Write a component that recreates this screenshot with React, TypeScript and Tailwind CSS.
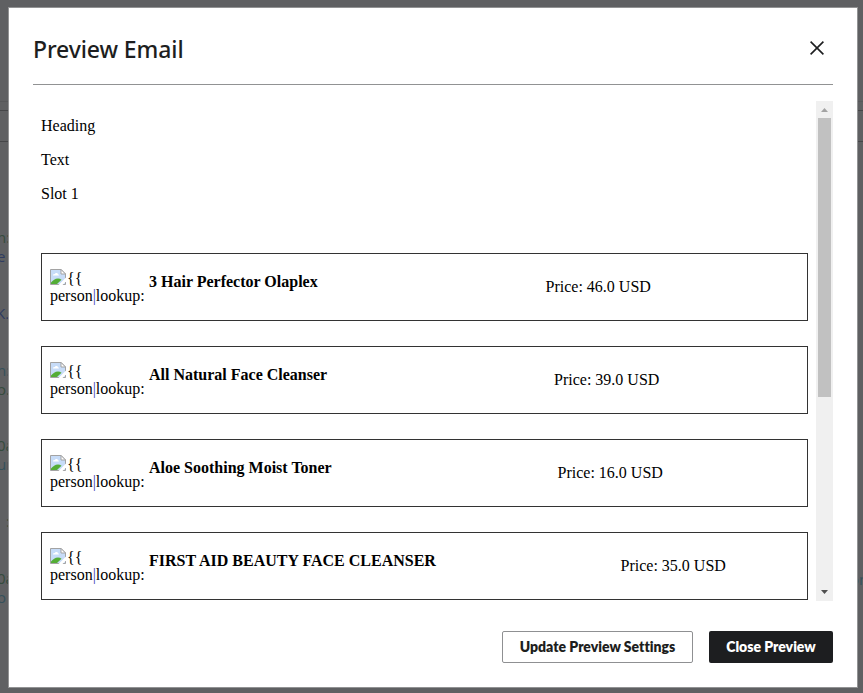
import React from "react";

const products = [
  { name: "3 Hair Perfector Olaplex", price: "46.0", cell: "w-[396.5px]" },
  { name: "All Natural Face Cleanser", price: "39.0", cell: "w-[405px]" },
  { name: "Aloe Soothing Moist Toner", price: "16.0", cell: "w-[408.5px]" },
  { name: "FIRST AID BEAUTY FACE CLEANSER", price: "35.0", cell: "w-[471.5px]" },
];

function BrokenImage() {
  return (
    <svg className="h-4 w-4 shrink-0" viewBox="0 0 16 16" fill="none">
      <path d="M.5.5h10.7L15.5 5v10.5H.5z" fill="#c7dcf8" stroke="#a3a3a3" />
      <path d="M3 6.6c0-1.2 1-1.7 1.8-1.4C5.2 3.4 7.7 3.5 8 5.2c1 0 1.300 1.400.4 1.400z" fill="#fff" />
      <path d="M1 15v-1.500C3 11.500 5 9.500 8 9.500c1.300 0 2.500.5 3.500 1.200L7 15z" fill="#54ad36" />
      <path d="M16 8.500 8.500 16h4L16 12.500z" fill="#fff" />
      <path d="M11 .5V5h4.500z" fill="#fff" stroke="#a3a3a3" />
    </svg>
  );
}

function ProductCard({ name, price, cell }: { name: string; price: string; cell: string }) {
  return (
    <div className="flex h-[68px] shrink-0 border border-[#333] pl-2">
      <div className="w-[99px] pt-[15px]">
        <div className="flex h-[18px] gap-px leading-[20px]">
          <BrokenImage />
          <span>{"{{"}</span>
        </div>
        <div className="leading-[18px]">
          person<span className="text-[#4345b5]">|</span>lookup:
        </div>
      </div>
      <div className={`${cell} shrink-0 whitespace-nowrap pt-[19px] font-bold leading-[18px]`}>{name}</div>
      <div className="whitespace-nowrap pt-6 leading-[18px]">Price: {price} USD</div>
    </div>
  );
}

// Slivers of the dimmed page that stay visible beside the dialog.
const fragments = [
  { text: "n:", place: "left-[-3px] top-[228px] text-[#354b3d]" },
  { text: "e", place: "left-[-3px] top-[247px] text-[#2f3c60]" },
  { text: "K.", place: "left-[-4px] top-[304px] text-[#2f3c60]" },
  { text: "n:", place: "left-[-3px] top-[361px] text-[#35505a]" },
  { text: "o.", place: "left-[-3px] top-[380px] text-[#354b3d]" },
  { text: "0a", place: "left-[-3px] top-[436px] text-[#354b3d]" },
  { text: "ur", place: "left-[-3px] top-[455px] text-[#35505a]" },
  { text: ":", place: "left-[6px] top-[512px] text-[#354b3d]" },
  { text: "0a", place: "left-[-3px] top-[569px] text-[#354b3d]" },
  { text: "o", place: "left-[-3px] top-[588px] text-[#35505a]" },
  { text: "on", place: "left-[850px] top-[570px] text-[#35505a]" },
];

function Backdrop() {
  return (
    <div className="absolute inset-0 overflow-hidden font-['Open_Sans',sans-serif] text-[15px] leading-[19px]">
      <div className="absolute inset-x-0 top-[101px] h-px bg-[#57585a]" />
      <div className="absolute inset-x-0 top-[110px] h-[32px] border-y border-[#454648]" />
      {fragments.map((f, i) => (
        <span key={i} className={`absolute ${f.place}`}>{f.text}</span>
      ))}
    </div>
  );
}

export default function App() {
  return (
    <div className="relative h-[693px] w-[863px] overflow-hidden bg-[#5f6062] pl-2 pt-[7px]">
      <Backdrop />
      <div className="relative flex h-[681px] w-[850px] flex-col border border-[#929394] bg-white px-6">
        <header className="flex h-[77px] shrink-0 items-start justify-between border-b border-[#919293]">
          <h1 className="pt-6 font-['Noto_Sans',sans-serif] text-[23px] font-medium leading-[34px] tracking-[-0.1px] text-[#1d1e20]">
            Preview Email
          </h1>
          <svg className="mr-[9px] mt-[33px] h-[14px] w-[14px]" viewBox="0 0 14 14" stroke="#1d1e20" strokeWidth="1.600">
            <path d="M.6.600 13.400 13.400M13.400.600.6 13.400" />
          </svg>
        </header>

        <div className="mt-4 flex h-[500px] shrink-0 overflow-hidden">
          <div className="flex w-[783px] flex-col pl-2 pr-2 pt-4 font-['Liberation_Serif',serif] text-[16px] leading-[18px] text-black">
            <p className="mb-4">Heading</p>
            <p className="mb-4">Text</p>
            <p>Slot 1</p>
            <div className="mt-[50px] flex flex-col gap-[25px]">
              {products.map((p) => (
                <ProductCard key={p.name} {...p} />
              ))}
            </div>
          </div>
          <div className="flex w-[17px] flex-col items-center bg-[#f0f0f0]">
            <svg className="h-[17px] w-[17px] shrink-0" viewBox="0 0 17 17">
              <path d="M5 11h7L8.500 7z" fill="#a3a3a3" />
            </svg>
            <div className="h-[279px] w-[13px] bg-[#c1c1c1]" />
            <svg className="mt-auto h-[17px] w-[17px] shrink-0" viewBox="0 0 17 17">
              <path d="M5 6h7L8.500 10z" fill="#505050" />
            </svg>
          </div>
        </div>

        <footer className="mt-[30px] flex shrink-0 justify-end gap-4 font-['Lato',sans-serif] text-[14px] font-extrabold [font-variant-ligatures:none]">
          <button className="h-8 w-[191px] whitespace-nowrap rounded-[2px] border border-[#8f9092] pb-px text-[#1d1e20]">
            Update Preview Settings
          </button>
          <button className="h-8 w-[124px] whitespace-nowrap rounded-[2px] bg-[#1d1e20] pb-px text-white">
            Close Preview
          </button>
        </footer>
      </div>
    </div>
  );
}
